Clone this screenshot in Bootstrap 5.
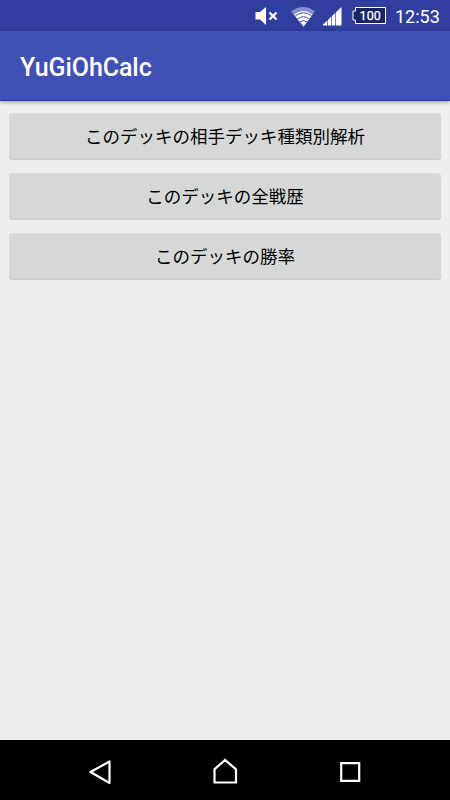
<!DOCTYPE html>
<html lang="ja">
<head>
<meta charset="utf-8">
<meta name="viewport" content="width=device-width, initial-scale=1">
<title>YuGiOhCalc</title>
<link href="https://cdn.jsdelivr.net/npm/bootstrap@5.3.0/dist/css/bootstrap.min.css" rel="stylesheet">
<style>
body { font-family: Roboto, "Noto Sans CJK JP", sans-serif; background: #eee; height: 800px; overflow: hidden; }
.status-strip { height: 31px; background: #303f9f; }
.status-icons { padding: 2px 10px 0 0; }
.clock { font-size: 18px; line-height: 30px; width: 45px; margin-left: 9px; white-space: nowrap; }
.app-header { height: 70px; padding: 3px 20px 0; background: #3f51b5; border-bottom: 1px solid #2038b4; box-shadow: 0 1px 4px rgba(0,0,0,.38); }
.app-title { font-size: 25px; font-weight: 500; line-height: 1; letter-spacing: -.08px; }
.deck-actions { padding: 12px 9px 0; gap: 13px; }
.deck-btn, .deck-btn:hover { height: 47px; padding: 0 0 2px; border: 0; border-radius: 4px; background: #d6d8d7; color: #000; font-size: 17.5px; line-height: 45px; font-family: "Noto Sans CJK JP", sans-serif; font-weight: 400; box-shadow: inset 0 -1px 0 #cbcdcc, inset 0 -2px 0 #d1d3d2, inset 0 1px 0 #dcdddd; }
.soft-keys { height: 60px; background: #000; }
</style>
<script src="https://cdn.jsdelivr.net/npm/bootstrap@5.3.0/dist/js/bootstrap.bundle.min.js"></script>
</head>
<body class="d-flex flex-column m-0">
<div class="status-strip status-icons d-flex justify-content-end align-items-start text-white flex-shrink-0">
  <svg width="131" height="28" viewBox="255 2 131 28" fill="#fff">
    <path d="M255.500 12h4.500l6-5v18l-6-5.500h-4.500z"/>
    <path d="M269.500 12.500l7 7m0-7l-7 7" stroke="#fff" stroke-width="2.200" fill="none"/>
    <path d="M291 11.300Q303 2.500 315 11.300L303.500 26.500z" opacity=".42"/>
    <path d="M294 14.500Q303.300 7.300 312.600 14.500L303.500 26.500z"/>
    <path d="M295.300 15.800Q303.400 9.800 311.700 15.800M297.600 18.900Q303.400 14.500 309.300 18.900M300 22Q303.400 19.400 307 22" fill="none" stroke="#303f9f" stroke-width=".9"/>
    <path d="M323 25.500V24.500L341.500 7v18.500z"/>
    <path d="M327.500 19v7m4-10v10m4-15v15" stroke="#303f9f" stroke-width=".65"/>
    <path d="M355.500 7.500h30v16h-30v-3.500h-2.500v-9h2.500z" fill="#1b2463" stroke="#fff" stroke-width="1"/>
    <text x="370.300" y="20" text-anchor="middle" font-family="Roboto, sans-serif" font-size="12.500" letter-spacing=".1" stroke="#fff" stroke-width=".25">100</text>
  </svg>
  <span class="clock">12:53</span>
</div>
<header class="app-header d-flex align-items-center text-white flex-shrink-0">
  <h1 class="app-title m-0">YuGiOhCalc</h1>
</header>
<main class="deck-actions d-flex flex-column flex-grow-1">
  <button type="button" class="btn deck-btn w-100">このデッキの相手デッキ種類別解析</button>
  <button type="button" class="btn deck-btn w-100">このデッキの全戦歴</button>
  <button type="button" class="btn deck-btn w-100">このデッキの勝率</button>
</main>
<nav class="soft-keys d-flex justify-content-center flex-shrink-0">
  <svg width="450" height="60" viewBox="0 740 450 60" fill="none" stroke="#fff" stroke-width="2.200">
    <path d="M109.500 761.500v21.500l-19-11z" stroke-linejoin="round"/>
    <path d="M214.500 782.500v-13.200l10.500-9.300 11 9.300v13.200z"/>
    <path d="M341.200 763.200h18v17.600h-18z"/>
  </svg>
</nav>
</body>
</html>
